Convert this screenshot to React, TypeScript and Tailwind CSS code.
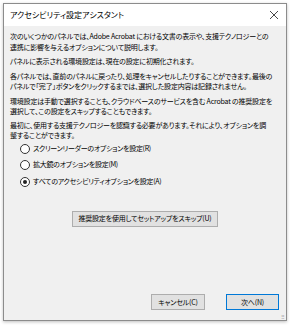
import React from "react";

const jp = "font-['Noto_Sans_CJK_JP','Noto_Sans',sans-serif] [font-feature-settings:'palt']";

function Radio({ label, checked, className = "" }: { label: string; checked?: boolean; className?: string }) {
  return (
    <label className={`flex items-center h-[16px] gap-[3px] ${className}`}>
      <span className="w-[10px] h-[10px] rounded-full border border-[#333] bg-white flex items-center justify-center">
        {checked && <span className="w-[4px] h-[4px] rounded-full bg-[#222]" />}
      </span>
      <span className="text-[7px] text-[#000] tracking-[-0.3px]">{label}</span>
    </label>
  );
}

export default function App() {
  return (
    <div className={`w-[290px] h-[326px] bg-white pt-[3px] px-[3px] ${jp}`}>
      <div className="w-[284px] h-[318px] border border-[#8c8c8c] shadow-[0_1px_3px_rgba(0,0,0,0.25)] flex flex-col bg-[#f0f0f0]">
        {/* title bar */}
        <div className="h-[22px] bg-white flex items-center justify-between pl-[6px] pr-[6px] shrink-0">
          <span className="text-[8px] text-[#000]">アクセシビリティ設定アシスタント</span>
          <svg width="10" height="10" viewBox="0 0 10 10" className="mr-[1px]">
            <path d="M1 1 L9 9 M9 1 L1 9" stroke="#333" strokeWidth="0.9" />
          </svg>
        </div>

        <div className="flex-1 flex flex-col pl-[6px] pr-[6px] pt-[5px] text-[7px] leading-[10.5px] text-[#000] tracking-[-0.2px]">
          <p className="whitespace-nowrap">
            次のいくつかのパネルでは、Adobe Acrobat における文書の表示や、支援テクノロジーとの
            <br />
            連携に影響を与えるオプションについて説明します。
          </p>
          <p className="mt-[4px] whitespace-nowrap">パネルに表示される環境設定は、現在の設定に初期化されます。</p>
          <p className="mt-[4px] whitespace-nowrap">
            各パネルでは、直前のパネルに戻ったり、処理をキャンセルしたりすることができます。最後の
            <br />
            パネルで「完了」ボタンをクリックするまでは、選択した設定内容は記録されません。
          </p>
          <p className="mt-[4px] whitespace-nowrap">
            環境設定は手動で選択することも、クラウドベースのサービスを含む Acrobat の推奨設定を
            <br />
            選択して、この設定をスキップすることもできます。
          </p>
          <p className="mt-[3px] whitespace-nowrap">
            最初に、使用する支援テクノロジーを認識する必要があります。それにより、オプションを調
            <br />
            整することができます。
          </p>

          <div className="pl-[10px] flex flex-col">
            <Radio label="スクリーンリーダーのオプションを設定(R)" />
            <Radio label="拡大鏡のオプションを設定(M)" />
            <Radio label="すべてのアクセシビリティオプションを設定(A)" checked className="mt-[1px]" />
          </div>

          <div className="mt-[21px] flex justify-center">
            <button className="w-[146px] h-[16px] bg-[#e1e1e1] border border-[#adadad] text-[7px] text-[#000] whitespace-nowrap flex items-center justify-center">
              推奨設定を使用してセットアップをスキップ(U)
            </button>
          </div>

          <div className="mt-auto mb-[10px] flex justify-end gap-[21px] pr-[1px]">
            <button className="w-[54px] h-[16px] bg-[#e1e1e1] border border-[#adadad] text-[7px] text-[#000] whitespace-nowrap flex items-center justify-center">
              キャンセル(C)
            </button>
            <button className="w-[53px] h-[16px] bg-[#e1e1e1] border border-[#0078d7] text-[7px] text-[#000] whitespace-nowrap flex items-center justify-center">
              次へ(N)
            </button>
          </div>
        </div>
        <div className="relative">
          <span className="absolute right-[1px] bottom-[1px] text-[5px] leading-none text-[#999]">⠿</span>
        </div>
      </div>
    </div>
  );
}
